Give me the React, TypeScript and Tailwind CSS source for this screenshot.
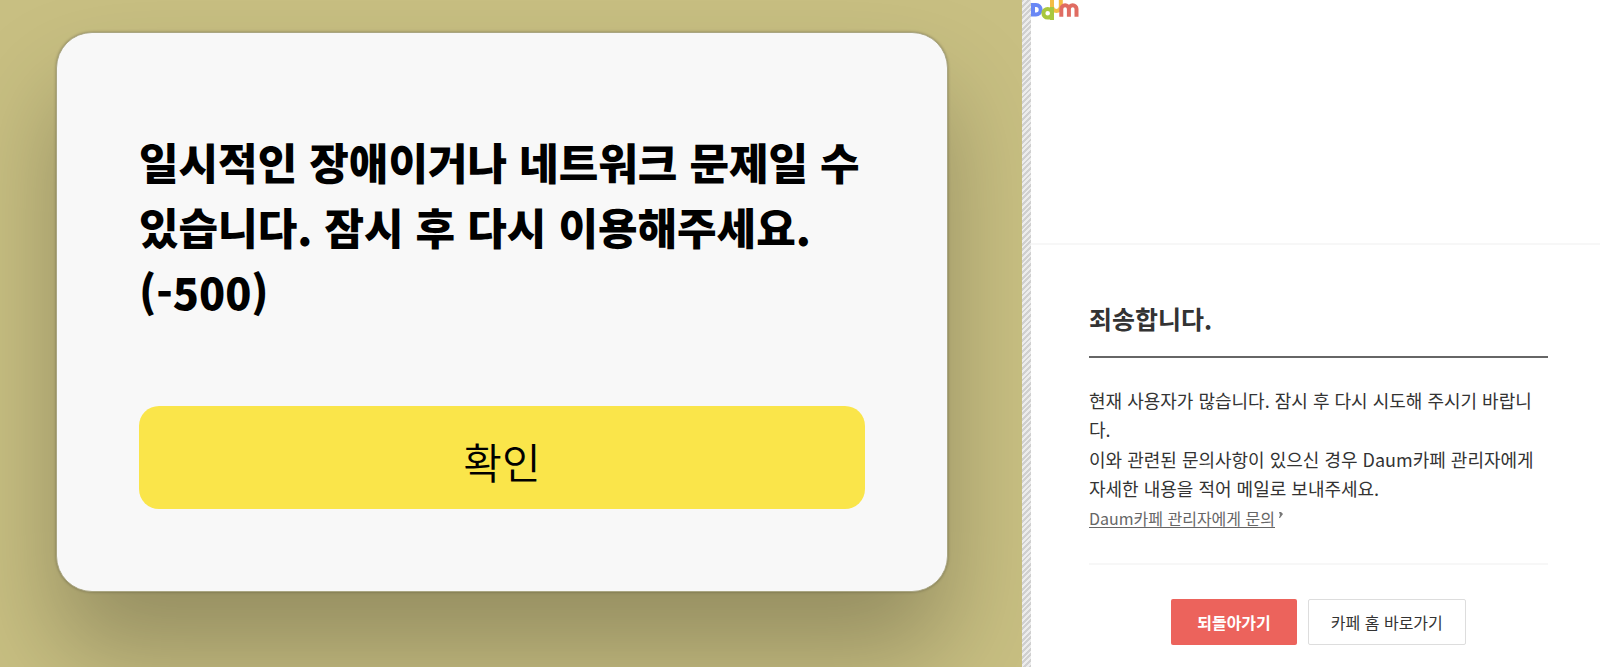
function DaumLogo() {
  return (
    <svg width="48" height="20" viewBox="0 0 48 20" fill="none" strokeWidth="4" role="img" aria-label="Daum">
      <path d="M21 0v6.500a4.400 4.400 0 0 0 8.800 0V0" stroke="#f4bd44" />
      <path d="M2 5h3a4.400 4.400 0 0 1 0 9.400H2V5Z" stroke="#6a88f5" />
      <path d="M21 7v13M21 13.300a4.300 4.300 0 1 1-8.600 0 4.300 4.300 0 0 1 8.600 0Z" stroke="#a9c73e" />
      <path d="M30.300 16.700V9a3.800 3.800 0 0 1 7.600 0V16.700M37.900 9a3.800 3.800 0 0 1 7.600 0V16.700" stroke="#e06c62" />
    </svg>
  )
}

function ErrorDialog() {
  return (
    <section className="flex items-start overflow-hidden bg-[#c8bf82] pt-8 pr-[74px] pl-14">
      <div
        role="alertdialog"
        aria-labelledby="dialog-message"
        className="flex-1 rounded-[36px] border border-[#aaa682] bg-[#f8f8f8] px-[82px] pt-24 pb-[82px] shadow-[0_60px_100px_rgba(0,0,0,0.26),0_0_3px_rgba(0,0,0,0.3)]"
      >
        <p id="dialog-message" className="text-[43px] leading-[65px] font-black text-black">
          일시적인 장애이거나 네트워크 문제일 수 있습니다. 잠시 후 다시 이용해주세요.
          <br />
          (-500)
        </p>
        <button
          type="button"
          className="mt-[82px] block h-[103px] w-full rounded-[20px] bg-[#fae54a] pt-1.5 text-[42px] font-[350] text-black"
        >
          확인
        </button>
      </div>
    </section>
  )
}

function BusyNotice() {
  return (
    <section className="bg-white text-[#333]">
      <header className="h-[245px] border-b-2 border-[#f7f7f7]">
        <DaumLogo />
      </header>
      <main className="pt-[55px] pr-[52px] pl-[58px]">
        <h1 className="border-b-2 border-[#666] pb-[19px] text-[25px] leading-[37px] font-bold">죄송합니다.</h1>
        <div className="mt-7 space-y-px border-b-2 border-[#f7f7f7] pb-[30px] text-[18px] leading-[29px] break-all">
          <p>현재 사용자가 많습니다. 잠시 후 다시 시도해 주시기 바랍니다.</p>
          <p>이와 관련된 문의사항이 있으신 경우 Daum카페 관리자에게 자세한 내용을 적어 메일로 보내주세요.</p>
          <a href="#contact" className="flex text-base leading-[29px] text-[#666]">
            <span className="underline underline-offset-2">Daum카페 관리자에게 문의</span>
            <svg className="mt-2 ml-1" width="4" height="6" viewBox="0 0 4 6" fill="#777" aria-hidden="true">
              <path d="M0 0h2l2 2-3 4H0l1-3Z" />
            </svg>
          </a>
        </div>
        <div className="mt-[34px] flex justify-center gap-[11px]">
          <button type="button" className="h-[46px] rounded-xs bg-[#ec635c] px-[26px] text-base font-bold text-white">
            되돌아가기
          </button>
          <button type="button" className="h-[46px] rounded-xs border border-[#ddd] px-[22px] text-base">
            카페 홈 바로가기
          </button>
        </div>
      </main>
    </section>
  )
}

export default function App() {
  return (
    <div
      className="grid min-h-screen grid-cols-[1022fr_9px_569fr] bg-white font-['Noto_Sans_CJK_KR',sans-serif]"
      lang="ko"
    >
      <ErrorDialog />
      <div className="bg-[repeating-linear-gradient(135deg,#d0d0d0_0px,#d0d0d0_2px,#ececec_2px,#ececec_4px)]" />
      <BusyNotice />
    </div>
  )
}
